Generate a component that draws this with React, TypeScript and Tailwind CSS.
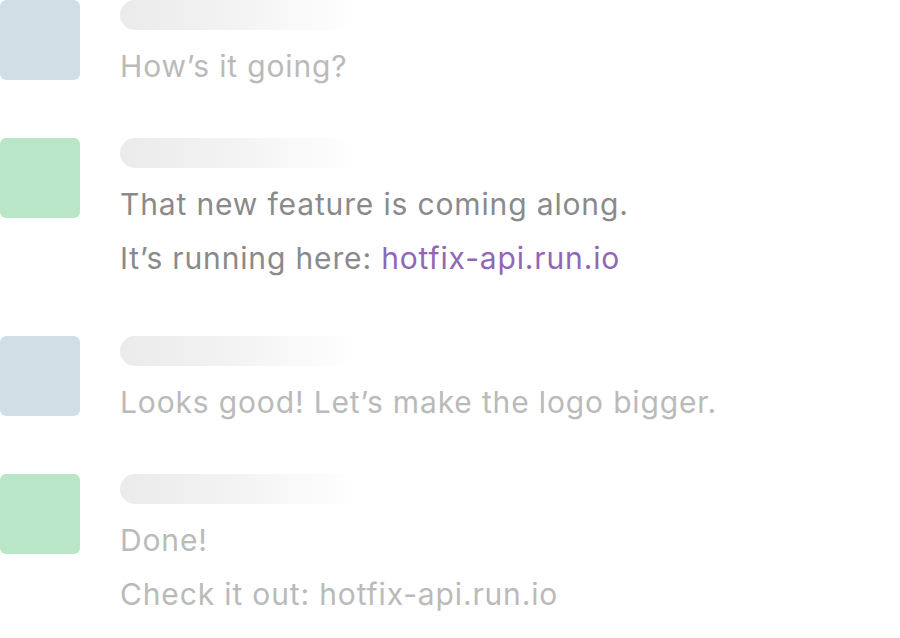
import React from "react";

type Message = {
  avatar: "blue" | "green";
  tone: "light" | "dark";
  lines: React.ReactNode[];
};

const messages: Message[] = [
  { avatar: "blue", tone: "light", lines: ["How’s it going?"] },
  {
    avatar: "green",
    tone: "dark",
    lines: [
      "That new feature is coming along.",
      <>
        It’s running here: <span className="text-[#9266b6]">hotfix-api.run.io</span>
      </>,
    ],
  },
  { avatar: "blue", tone: "light", lines: ["Looks good! Let’s make the logo bigger."] },
  { avatar: "green", tone: "light", lines: ["Done!", "Check it out: hotfix-api.run.io"] },
];

function ChatRow({ msg }: { msg: Message }) {
  return (
    <div className="flex items-start gap-10">
      <div
        className={`h-20 w-20 shrink-0 rounded-md ${
          msg.avatar === "blue" ? "bg-[#d0e0e6]" : "bg-[#b8e6c6]"
        }`}
      />
      <div className="flex flex-col">
        <div className="h-[30px] w-[236px] rounded-full bg-gradient-to-r from-[#ebebeb] via-[#f3f3f3] to-white" />
        <div
          className={`mt-[9px] flex flex-col text-[30px] leading-[54px] tracking-[0.85px] ${
            msg.tone === "dark" ? "text-[#8a8a8a]" : "text-[#bababa]"
          }`}
        >
          {msg.lines.map((line, i) => (
            <div key={i}>{line}</div>
          ))}
        </div>
      </div>
    </div>
  );
}

export default function App() {
  return (
    <div className="h-[638px] w-[900px] overflow-hidden bg-white font-['Inter',sans-serif]">
      <div className="flex flex-col">
        <ChatRow msg={messages[0]} />
        <div className="mt-[45px]">
          <ChatRow msg={messages[1]} />
        </div>
        <div className="mt-[51px]">
          <ChatRow msg={messages[2]} />
        </div>
        <div className="mt-[45px]">
          <ChatRow msg={messages[3]} />
        </div>
      </div>
    </div>
  );
}
